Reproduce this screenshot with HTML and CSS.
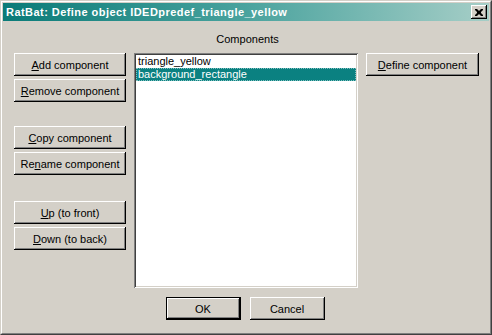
FILE: index.html
```html
<!DOCTYPE html>
<html lang="en">
<head>
  <meta charset="UTF-8" />
  <title>RatBat: Define object</title>
  <link rel="stylesheet" href="styles.css">
</head>
<body>
  <div class="window">
    <div class="frame">
      <div class="title-bar">
        <span class="title">RatBat: Define object IDEDpredef_triangle_yellow</span>
        <button class="close-btn" type="button">
          <svg width="8" height="7" viewBox="0 0 8 7">
            <path d="M0 0h2l2 2 2-2h2v1l-2 2v1l2 2v1h-2l-2-2-2 2h-2v-1l2-2v-1l-2-2z" fill="#000"/>
          </svg>
        </button>
      </div>

      <div class="content">
        <div class="label">Components</div>

        <div class="col-left">
          <button class="btn" type="button"><u>A</u>dd component</button>
          <button class="btn" type="button"><u>R</u>emove component</button>
          <button class="btn group" type="button"><u>C</u>opy component</button>
          <button class="btn" type="button">Re<u>n</u>ame component</button>
          <button class="btn group-lg" type="button"><u>U</u>p (to front)</button>
          <button class="btn" type="button"><u>D</u>own (to back)</button>
        </div>

        <div class="listbox">
          <div class="item">triangle_yellow</div>
          <div class="item selected">background_rectangle</div>
        </div>

        <div class="col-right">
          <button class="btn" type="button"><u>D</u>efine component</button>
        </div>

        <div class="footer">
          <button class="btn btn-sm default" type="button">OK</button>
          <button class="btn btn-sm" type="button">Cancel</button>
        </div>
      </div>
    </div>
  </div>
</body>
</html>
```

FILE: styles.css
```css
:root {
  --face: #d4d0c8;
  --shadow: #808080;
  --dark: #404040;
  --light: #ffffff;
  --teal: #0b8181;
}

html, body {
  margin: 0;
  padding: 0;
  background: var(--face);
  font-family: "Liberation Sans", Arial, sans-serif;
  font-size: 11px;
  color: #000;
}

.window {
  width: 492px;
  height: 335px;
  box-sizing: border-box;
  border: 1px solid;
  border-color: var(--face) var(--dark) var(--dark) var(--face);
}

.frame {
  height: 100%;
  box-sizing: border-box;
  border: 1px solid;
  border-color: var(--light) var(--shadow) var(--shadow) var(--light);
  padding: 1px;
}

.title-bar {
  height: 18px;
  display: flex;
  align-items: center;
  justify-content: space-between;
  padding: 0 2px 0 3px;
  background: linear-gradient(to right, #0a7b78 0%, #4aa39e 50%, #a6cec7 100%);
}

.title {
  color: #fff;
  font-weight: 700;
  font-size: 11px;
  letter-spacing: 0.45px;
}

.close-btn {
  width: 16px;
  height: 14px;
  padding: 0;
  border: none;
  background: var(--face);
  display: flex;
  align-items: center;
  justify-content: center;
  box-shadow: inset -1px -1px #000, inset 1px 1px var(--light),
              inset -2px -2px var(--shadow), inset 2px 2px var(--face);
}

.content {
  display: grid;
  grid-template-columns: 112px 224px 113px;
  grid-template-rows: 13px 235px auto;
  column-gap: 8px;
  row-gap: 7px;
  padding: 12px 0 0 11px;
}

.label {
  grid-column: 2;
  grid-row: 1;
  text-align: center;
  line-height: 13px;
  padding-left: 3px;
}

.col-left, .col-right {
  grid-row: 2;
  display: flex;
  flex-direction: column;
  gap: 3px;
}

.col-left { grid-column: 1; }
.col-right { grid-column: 3; }

.btn {
  height: 23px;
  padding: 0;
  border: none;
  background: var(--face);
  font-family: inherit;
  font-size: 11px;
  color: #000;
  box-shadow: inset -1px -1px #000, inset 1px 1px var(--light),
              inset -2px -2px var(--shadow), inset 2px 2px var(--face);
}

.btn.group {
  margin-top: 21px;
}

.btn.group-lg {
  margin-top: 23px;
}

.listbox {
  grid-column: 2;
  grid-row: 2;
  background: #fff;
  box-sizing: border-box;
  padding: 2px;
  box-shadow: inset 1px 1px var(--shadow), inset -1px -1px var(--light),
              inset 2px 2px var(--dark), inset -2px -2px var(--face);
}

.item {
  height: 13px;
  line-height: 13px;
  padding-left: 2px;
  white-space: nowrap;
}

.item.selected {
  background: var(--teal);
  color: #fff;
  outline: 1px dotted #7fc0c0;
  outline-offset: -1px;
}

.footer {
  grid-column: 2;
  grid-row: 3;
  display: flex;
  justify-content: center;
  gap: 9px;
  padding: 2px 2px 0 0;
}

.btn-sm {
  width: 75px;
}

.btn.default {
  box-shadow: inset 0 0 0 1px #000, inset -2px -2px #000, inset 2px 2px var(--light),
              inset -3px -3px var(--shadow), inset 3px 3px var(--face);
}
```
